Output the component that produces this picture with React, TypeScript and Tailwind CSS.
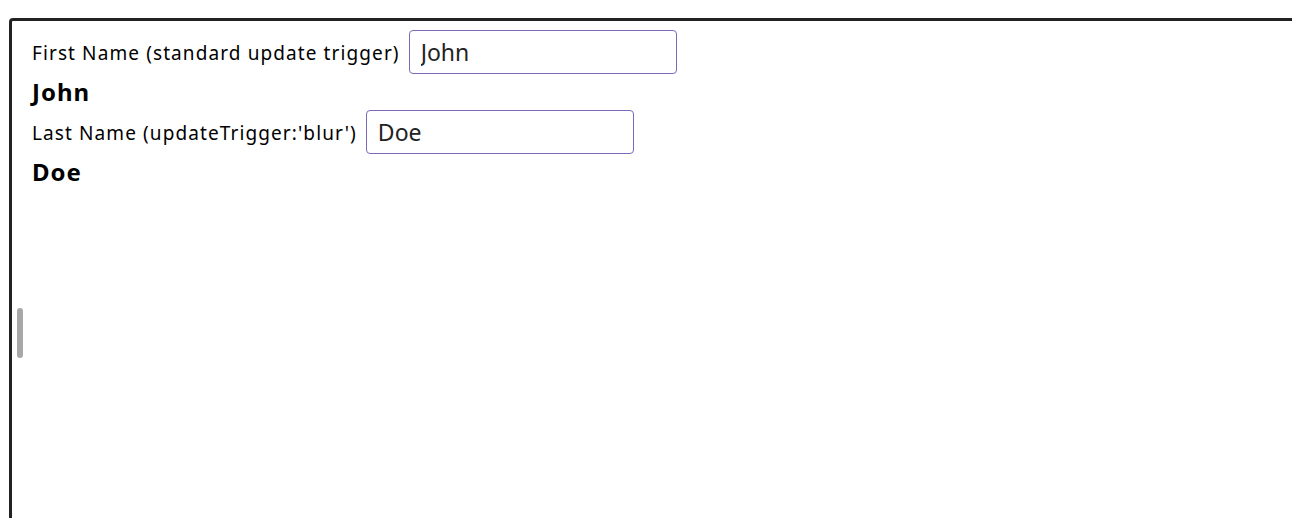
import React from "react";

export default function App() {
  return (
    <div className="w-[1292px] h-[518px] bg-white overflow-hidden pl-[9px] pt-[18px]" style={{ fontFamily: '"Noto Sans", "Open Sans", sans-serif' }}>
      <div className="relative h-[520px] w-[1300px] border-l-[3px] border-t-[3px] border-[#222222] rounded-tl-[4px] pl-[20px] pt-[9px] text-black">
        <div className="flex items-center h-[44px]">
          <span className="text-[19px] tracking-[1.1px] pt-[2px]">First Name (standard update trigger)</span>
          <input
            className="ml-[9px] h-[44px] w-[268px] rounded-[4px] border border-[#7d68b8] px-[11px] text-[23px] text-[#222] outline-none"
            style={{ fontFamily: '"Noto Sans", sans-serif' }}
            defaultValue="John"
          />
        </div>
        <div className="h-[36px] flex items-center text-[24px] font-bold tracking-[1px]">John</div>
        <div className="flex items-center h-[44px]">
          <span className="text-[19px] tracking-[1.1px] pt-[2px]">Last Name (updateTrigger:'blur')</span>
          <input
            className="ml-[9px] h-[44px] w-[268px] rounded-[4px] border border-[#7d68b8] px-[11px] text-[23px] text-[#222] outline-none"
            style={{ fontFamily: '"Noto Sans", sans-serif' }}
            defaultValue="Doe"
          />
        </div>
        <div className="h-[36px] flex items-center text-[24px] font-bold tracking-[1px]">Doe</div>
        <div className="absolute left-[5px] top-[287px] w-[6px] h-[50px] rounded-full bg-[#a8a8a8]" />
      </div>
    </div>
  );
}
